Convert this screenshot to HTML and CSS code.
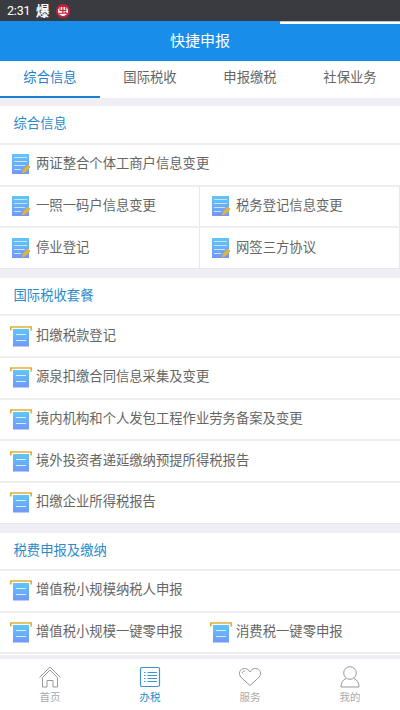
FILE: index.html
```html
<!DOCTYPE html>
<html lang="zh-CN">
<head>
<meta charset="utf-8">
<title>快捷申报</title>
<link rel="stylesheet" href="styles.css">
</head>
<body>
<svg width="0" height="0" class="defs">
  <defs>
    <linearGradient id="g" x1="0" y1="0" x2="0" y2="1"><stop offset="0" stop-color="#5fc6f8"/><stop offset="1" stop-color="#7397fb"/></linearGradient>
    <symbol id="edit" viewBox="0 0 24 22">
      <path d="M3 1h17v20H3z" fill="url(#g)"/>
      <path d="M5 4.500h13M5 8.500h13M5 12.500h11M5 16.500h7" stroke="#c3e6ff" stroke-width="1"/>
      <path d="M12.800 20.500l1-3.800 5.200-5.200 2.600 2.600-5.200 5.200z" fill="#e2b23a"/>
    </symbol>
    <symbol id="form" viewBox="0 0 24 22">
      <path d="M1.800 5.500V2h20.400v3.500" fill="none" stroke="#dfb13a" stroke-width="1.700"/>
      <path d="M4 4h16v17.500H4z" fill="url(#g)"/>
      <path d="M7 9.500h10M7 15.500h10" stroke="#d8efff" stroke-width="1.200"/>
    </symbol>
  </defs>
</svg>
<div class="app">
  <div class="status"><span class="time">2:31</span><span class="boom">爆</span><span class="badge">虫</span></div>
  <header class="header"><i class="progress"></i>快捷申报</header>
  <nav class="tabs"><a class="tab active">综合信息</a><a class="tab">国际税收</a><a class="tab">申报缴税</a><a class="tab">社保业务</a></nav>
  <main class="content">
    <section class="section">
      <h2>综合信息</h2>
      <div class="row"><div class="cell"><svg><use href="#edit"/></svg>两证整合个体工商户信息变更</div></div>
      <div class="row split"><div class="cell"><svg><use href="#edit"/></svg>一照一码户信息变更</div><div class="cell"><svg><use href="#edit"/></svg>税务登记信息变更</div></div>
      <div class="row split"><div class="cell"><svg><use href="#edit"/></svg>停业登记</div><div class="cell"><svg><use href="#edit"/></svg>网签三方协议</div></div>
    </section>
    <section class="section">
      <h2>国际税收套餐</h2>
      <div class="row"><div class="cell"><svg><use href="#form"/></svg>扣缴税款登记</div></div>
      <div class="row"><div class="cell"><svg><use href="#form"/></svg>源泉扣缴合同信息采集及变更</div></div>
      <div class="row"><div class="cell"><svg><use href="#form"/></svg>境内机构和个人发包工程作业劳务备案及变更</div></div>
      <div class="row"><div class="cell"><svg><use href="#form"/></svg>境外投资者递延缴纳预提所得税报告</div></div>
      <div class="row"><div class="cell"><svg><use href="#form"/></svg>扣缴企业所得税报告</div></div>
    </section>
    <section class="section">
      <h2>税费申报及缴纳</h2>
      <div class="row"><div class="cell"><svg><use href="#form"/></svg>增值税小规模纳税人申报</div></div>
      <div class="row"><div class="cell"><svg><use href="#form"/></svg>增值税小规模一键零申报</div><div class="cell"><svg><use href="#form"/></svg>消费税一键零申报</div></div>
      <div class="row"></div>
    </section>
  </main>
  <footer class="bottom">
    <a class="item"><svg viewBox="0 0 24 24"><path d="M1.500 12.500L12 2l10.500 10.500M4.500 12.500v9.500h4.500v-6.500h6V22h4.500v-9.500L12 5z"/></svg>首页</a>
    <a class="item active"><svg viewBox="0 0 24 24"><rect x="2.500" y="2.500" width="19" height="19" rx="1.500"/><path d="M6 7.500h1.500M9.500 7.500H19M6 10.500h1.500M9.500 10.500H19M6 13.500h1.500M9.500 13.500H19M6 16.500h1.500M9.500 16.500H19"/></svg>办税</a>
    <a class="item"><svg viewBox="0 0 24 24"><path d="M12 20.500L3.200 12.500C-.5 8.500 2 3.500 6.500 3.500c2.500 0 4.500 1.500 5.500 3.500 1-2 3-3.500 5.500-3.500 4.500 0 7 5 3.300 9zM4.300 8.500c0-1.500 1-2.500 2.500-2.500"/></svg>服务</a>
    <a class="item"><svg viewBox="0 0 24 24"><circle cx="12" cy="8" r="6.300"/><path d="M8 13.500c-3.500 1.500-5 4.500-5 8.500h18c0-4-1.500-7-5-8.500"/></svg>我的</a>
  </footer>
</div>
</body>
</html>
```
FILE: styles.css
```css
* { box-sizing: border-box; }
body {
  margin: 0;
  font-family: Roboto, "Noto Sans CJK SC", sans-serif;
  font-size: 13.33px;
  color: #666;
  background: #eeeef4;
}
.defs { position: absolute; }
.app { display: flex; flex-direction: column; height: 710px; overflow: hidden; }
.status {
  flex: none;
  height: 21px;
  padding-left: 7px;
  display: flex;
  align-items: center;
  background: #3a3b40;
  color: #fff;
}
.time { width: 29px; font-size: 12.5px; letter-spacing: -.2px; }
.boom { width: 20px; font-size: 13.5px; font-weight: 700; line-height: 20px; }
.badge {
  width: 14px;
  height: 14px;
  border: 2px solid #c5213b;
  border-radius: 50%;
  background: #fff;
  color: #c5213b;
  font-size: 9px;
  font-weight: 700;
  line-height: 9px;
  text-align: center;
}
.header {
  flex: none;
  position: relative;
  height: 40px;
  background: #188eea;
  color: #fff;
  font-size: 15px;
  line-height: 41px;
  text-align: center;
}
.progress { position: absolute; top: 0; right: 0; width: 120px; height: 3px; background: #fff; border-top: 1px solid #b5c6d6; }
.tabs { flex: none; display: flex; height: 37px; background: #fff; }
.tab { flex: 1; text-align: center; line-height: 33px; border-bottom: 2px solid transparent; }
.tab.active { color: #2580cc; border-color: #1c7fd6; }
.content { flex: 1; min-height: 0; overflow: hidden; padding-top: 8px; }
.section { margin-bottom: 9.33px; background: #fff; }
h2 {
  margin: 0;
  height: 36px;
  padding-left: 13.5px;
  color: #2b8acb;
  font-size: 13.33px;
  font-weight: 400;
  line-height: 36px;
}
.section:first-child h2 { height: 37px; }
.row { display: flex; height: 41.67px; border-top: 2px solid #eeeef1; }
.section:not(:last-child) .row:last-child { height: 42.67px; border-bottom: 1px solid #e8e8ec; }
.cell { flex: 0 0 50%; display: flex; align-items: center; padding: 0 0 4px 9px; white-space: nowrap; }
.cell svg { flex: none; width: 24px; height: 22px; margin: 3px 3px 0 0; }
.split .cell { border-right: 1px solid #e8e8ec; }
.bottom {
  flex: none;
  height: 55px;
  border-top: 4px solid #eeeef4;
  display: flex;
  background: #fff;
}
.item {
  flex: 1;
  display: flex;
  flex-direction: column;
  align-items: center;
  padding-top: 6px;
  color: #aaa;
  font-size: 10.5px;
  line-height: 17px;
}
.item svg { flex: none; width: 24px; height: 24px; fill: none; stroke: #999; stroke-width: 1; }
.item.active { color: #2b8acb; }
.item.active svg { stroke: #3d94d0; stroke-width: 1.2; }
```
